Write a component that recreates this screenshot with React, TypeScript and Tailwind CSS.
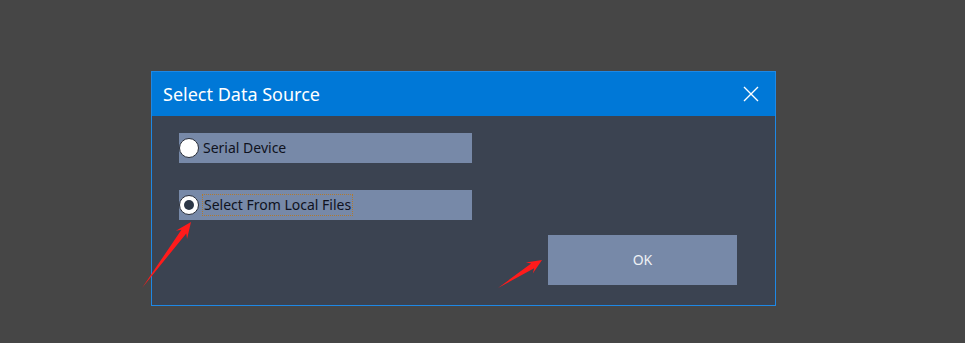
import React from "react";

function Radio({ checked }: { checked: boolean }) {
  return (
    <span className="relative flex h-[20px] w-[20px] shrink-0 items-center justify-center rounded-full border border-[#2a2f3a] bg-white">
      {checked && <span className="h-[10px] w-[10px] rounded-full bg-[#2c3747]" />}
    </span>
  );
}

export default function App() {
  return (
    <div className="relative h-[343px] w-[965px] overflow-hidden bg-[#464646] pl-[151px] pt-[71px]" style={{ fontFamily: '"Noto Sans", "Open Sans", sans-serif' }}>
      <div className="flex h-[235px] w-[625px] flex-col border border-[#1e88e5] bg-[#3b4351]">
        <div className="flex h-[44px] shrink-0 items-center justify-between bg-[#0078d7] pl-[11px] pr-[16px]">
          <span className="text-[18px] leading-none text-white">Select Data Source</span>
          <svg width="16" height="16" viewBox="0 0 16 16" className="block">
            <path d="M1 1 L15 15 M15 1 L1 15" stroke="white" strokeWidth="1.4" fill="none" />
          </svg>
        </div>
        <div className="flex flex-1 flex-col pl-[27px] pt-[17px]">
          <div className="flex h-[30px] w-[293px] items-center bg-[#7789a8]">
            <Radio checked={false} />
            <span className="ml-[4px] text-[14px] leading-none text-[#0f1220]">Serial Device</span>
          </div>
          <div className="mt-[27px] flex h-[30px] w-[293px] items-center bg-[#7789a8]">
            <Radio checked={true} />
            <span className="ml-[3px] border border-dotted border-[#b07a30] px-[1px] py-[3px] text-[14px] leading-none text-[#0f1220]">Select From Local Files</span>
          </div>
          <div className="mr-[38px] mt-[15px] flex h-[50px] w-[189px] items-center justify-center self-end bg-[#7789a8]">
            <span className="text-[14px] leading-none text-[#eef1f5]">OK</span>
          </div>
        </div>
      </div>
      <svg className="pointer-events-none absolute left-0 top-0" width="965" height="343" viewBox="0 0 965 343">
        <polygon points="142,288 186.25,233.41 187.06,239 191,222 175.84,230.65 181.43,229.83" fill="#ff1b1b" />
        <polygon points="498,288 534.17,268.22 532.75,273.47 542,260 525.85,262.47 531.19,263.48" fill="#ff1b1b" />
      </svg>
    </div>
  );
}
